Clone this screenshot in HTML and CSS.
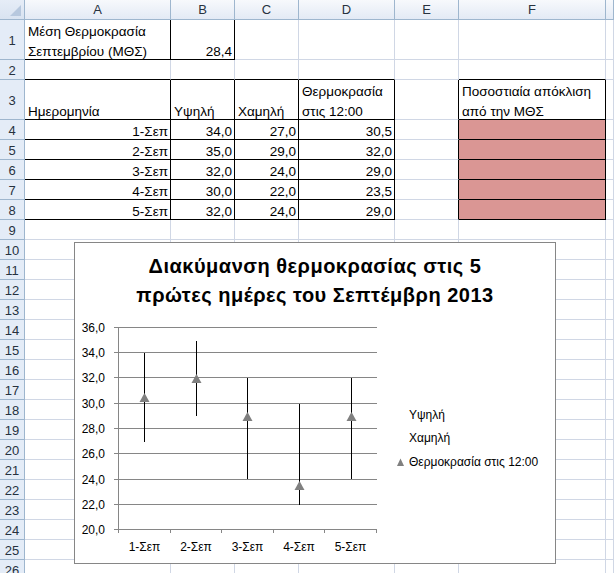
FILE: index.html
```html
<!DOCTYPE html>
<html lang="el">
<head>
<meta charset="utf-8">
<title>Θερμοκρασία Σεπτεμβρίου</title>
<link rel="stylesheet" href="styles.css">
</head>
<body>
<div class="sheet">
  <div class="corner"><svg width="24" height="19" viewBox="0 0 24 19"><polygon points="10,16 21,16 21,5" fill="#b7c8de"/></svg></div>
  <div class="ch">A</div><div class="ch">B</div><div class="ch">C</div><div class="ch">D</div><div class="ch">E</div><div class="ch">F</div><div class="ch"></div>

  <div class="rh">1</div><div class="c bb br"><span>Μέση Θερμοκρασία<br>Σεπτεμβρίου (ΜΘΣ)</span></div><div class="c r bb br"><span>28,4</span></div><div class="c"></div><div class="c"></div><div class="c"></div><div class="c"></div><div class="c"></div>

  <div class="rh">2</div><div class="c bb"></div><div class="c bb"></div><div class="c bb"></div><div class="c bb"></div><div class="c"></div><div class="c bb"></div><div class="c"></div>

  <div class="rh">3</div><div class="c bb br"><span>Ημερομηνία</span></div><div class="c bb br"><span>Υψηλή</span></div><div class="c bb br"><span>Χαμηλή</span></div><div class="c bb br"><span>Θερμοκρασία<br>στις 12:00</span></div><div class="c br"></div><div class="c bb br"><span>Ποσοστιαία απόκλιση<br>από την ΜΘΣ</span></div><div class="c"></div>

  <div class="rh">4</div><div class="c r bb br"><span>1-Σεπ</span></div><div class="c r bb br"><span>34,0</span></div><div class="c r bb br"><span>27,0</span></div><div class="c r bb br"><span>30,5</span></div><div class="c br"></div><div class="c bb br fill"></div><div class="c"></div>

  <div class="rh">5</div><div class="c r bb br"><span>2-Σεπ</span></div><div class="c r bb br"><span>35,0</span></div><div class="c r bb br"><span>29,0</span></div><div class="c r bb br"><span>32,0</span></div><div class="c br"></div><div class="c bb br fill"></div><div class="c"></div>

  <div class="rh">6</div><div class="c r bb br"><span>3-Σεπ</span></div><div class="c r bb br"><span>32,0</span></div><div class="c r bb br"><span>24,0</span></div><div class="c r bb br"><span>29,0</span></div><div class="c br"></div><div class="c bb br fill"></div><div class="c"></div>

  <div class="rh">7</div><div class="c r bb br"><span>4-Σεπ</span></div><div class="c r bb br"><span>30,0</span></div><div class="c r bb br"><span>22,0</span></div><div class="c r bb br"><span>23,5</span></div><div class="c br"></div><div class="c bb br fill"></div><div class="c"></div>

  <div class="rh">8</div><div class="c r bb br"><span>5-Σεπ</span></div><div class="c r bb br"><span>32,0</span></div><div class="c r bb br"><span>24,0</span></div><div class="c r bb br"><span>29,0</span></div><div class="c br"></div><div class="c bb br fill"></div><div class="c"></div>

  <div class="rh">9</div><div class="c"></div><div class="c"></div><div class="c"></div><div class="c"></div><div class="c"></div><div class="c"></div><div class="c"></div>
  <div class="rh">10</div><div class="c"></div><div class="c"></div><div class="c"></div><div class="c"></div><div class="c"></div><div class="c"></div><div class="c"></div>
  <div class="rh">11</div><div class="c"></div><div class="c"></div><div class="c"></div><div class="c"></div><div class="c"></div><div class="c"></div><div class="c"></div>
  <div class="rh">12</div><div class="c"></div><div class="c"></div><div class="c"></div><div class="c"></div><div class="c"></div><div class="c"></div><div class="c"></div>
  <div class="rh">13</div><div class="c"></div><div class="c"></div><div class="c"></div><div class="c"></div><div class="c"></div><div class="c"></div><div class="c"></div>
  <div class="rh">14</div><div class="c"></div><div class="c"></div><div class="c"></div><div class="c"></div><div class="c"></div><div class="c"></div><div class="c"></div>
  <div class="rh">15</div><div class="c"></div><div class="c"></div><div class="c"></div><div class="c"></div><div class="c"></div><div class="c"></div><div class="c"></div>
  <div class="rh">16</div><div class="c"></div><div class="c"></div><div class="c"></div><div class="c"></div><div class="c"></div><div class="c"></div><div class="c"></div>
  <div class="rh">17</div><div class="c"></div><div class="c"></div><div class="c"></div><div class="c"></div><div class="c"></div><div class="c"></div><div class="c"></div>
  <div class="rh">18</div><div class="c"></div><div class="c"></div><div class="c"></div><div class="c"></div><div class="c"></div><div class="c"></div><div class="c"></div>
  <div class="rh">19</div><div class="c"></div><div class="c"></div><div class="c"></div><div class="c"></div><div class="c"></div><div class="c"></div><div class="c"></div>
  <div class="rh">20</div><div class="c"></div><div class="c"></div><div class="c"></div><div class="c"></div><div class="c"></div><div class="c"></div><div class="c"></div>
  <div class="rh">21</div><div class="c"></div><div class="c"></div><div class="c"></div><div class="c"></div><div class="c"></div><div class="c"></div><div class="c"></div>
  <div class="rh">22</div><div class="c"></div><div class="c"></div><div class="c"></div><div class="c"></div><div class="c"></div><div class="c"></div><div class="c"></div>
  <div class="rh">23</div><div class="c"></div><div class="c"></div><div class="c"></div><div class="c"></div><div class="c"></div><div class="c"></div><div class="c"></div>
  <div class="rh">24</div><div class="c"></div><div class="c"></div><div class="c"></div><div class="c"></div><div class="c"></div><div class="c"></div><div class="c"></div>
  <div class="rh">25</div><div class="c"></div><div class="c"></div><div class="c"></div><div class="c"></div><div class="c"></div><div class="c"></div><div class="c"></div>
  <div class="rh">26</div><div class="c"></div><div class="c"></div><div class="c"></div><div class="c"></div><div class="c"></div><div class="c"></div><div class="c"></div>

  <div class="chart">
    <div class="title">Διακύμανση θερμοκρασίας στις 5<br>πρώτες ημέρες του Σεπτέμβρη 2013</div>
    <svg class="plot" width="480" height="320" viewBox="0 0 480 320">
      <g transform="translate(-75,-243)">
        <g class="grid" stroke="#868686" stroke-width="1" fill="none">
          <line x1="114" y1="327.5" x2="377" y2="327.5"/>
          <line x1="114" y1="352.5" x2="377" y2="352.5"/>
          <line x1="114" y1="377.5" x2="377" y2="377.5"/>
          <line x1="114" y1="403.5" x2="377" y2="403.5"/>
          <line x1="114" y1="428.5" x2="377" y2="428.5"/>
          <line x1="114" y1="453.5" x2="377" y2="453.5"/>
          <line x1="114" y1="479.5" x2="377" y2="479.5"/>
          <line x1="114" y1="504.5" x2="377" y2="504.5"/>
          <line x1="114" y1="529.5" x2="377" y2="529.5"/>
          <line x1="118.5" y1="327.5" x2="118.5" y2="533"/>
          <line x1="170.5" y1="529.5" x2="170.5" y2="533"/>
          <line x1="221.5" y1="529.5" x2="221.5" y2="533"/>
          <line x1="273.5" y1="529.5" x2="273.5" y2="533"/>
          <line x1="324.5" y1="529.5" x2="324.5" y2="533"/>
          <line x1="376.5" y1="529.5" x2="376.5" y2="533"/>
        </g>
        <g class="hl" stroke="#000" stroke-width="1">
          <line x1="144.5" y1="353" x2="144.5" y2="441.5"/>
          <line x1="196.5" y1="340.5" x2="196.5" y2="416"/>
          <line x1="247.5" y1="378" x2="247.5" y2="479"/>
          <line x1="299.5" y1="403.5" x2="299.5" y2="504.5"/>
          <line x1="351.5" y1="378" x2="351.5" y2="479"/>
        </g>
        <g class="mk" fill="#808080">
          <polygon points="139.5,402 149.5,402 144.5,393"/>
          <polygon points="191.5,383 201.5,383 196.5,374"/>
          <polygon points="242.5,421 252.5,421 247.5,412"/>
          <polygon points="294.5,490 304.5,490 299.5,481"/>
          <polygon points="346.5,421 356.5,421 351.5,412"/>
          <polygon points="397,466 404,466 400.5,458.5"/>
        </g>
        <g class="ylab">
          <text x="105" y="332">36,0</text>
          <text x="105" y="357">34,0</text>
          <text x="105" y="382">32,0</text>
          <text x="105" y="408">30,0</text>
          <text x="105" y="433">28,0</text>
          <text x="105" y="458">26,0</text>
          <text x="105" y="484">24,0</text>
          <text x="105" y="509">22,0</text>
          <text x="105" y="534">20,0</text>
        </g>
        <g class="xlab">
          <text x="144.5" y="551">1-Σεπ</text>
          <text x="196" y="551">2-Σεπ</text>
          <text x="247.5" y="551">3-Σεπ</text>
          <text x="299" y="551">4-Σεπ</text>
          <text x="350.5" y="551">5-Σεπ</text>
        </g>
        <g class="leg">
          <text x="409" y="419">Υψηλή</text>
          <text x="409" y="442">Χαμηλή</text>
          <text x="409" y="466">Θερμοκρασία στις 12:00</text>
        </g>
      </g>
    </svg>
  </div>
</div>
</body>
</html>
```

FILE: styles.css
```css
html, body {
  margin: 0;
  padding: 0;
  background: #fff;
}
body {
  width: 614px;
  height: 573px;
  overflow: hidden;
  font-family: "Liberation Sans", Arial, sans-serif;
  font-size: 13.5px;
  color: #000;
}
.sheet {
  position: relative;
  display: grid;
  grid-template-columns: 25px 146px 64px 64px 96px 64px 147px 8px;
  grid-template-rows: 20px 40px 20px 40px;
  grid-auto-rows: 20px;
}
.corner {
  box-sizing: border-box;
  background: linear-gradient(#e6edf7, #d9e3f1);
  border-right: 1px solid #9eb6ce;
  border-bottom: 1px solid #9eb6ce;
  display: flex;
}
.corner svg { display: block; }
.ch {
  box-sizing: border-box;
  background: linear-gradient(#f7f9fc, #e3eaf5);
  border-right: 1px solid #9eb6ce;
  border-bottom: 1px solid #9eb6ce;
  display: flex;
  align-items: center;
  justify-content: center;
  color: #27323f;
  font-size: 13px;
  line-height: 19px;
}
.rh {
  box-sizing: border-box;
  background: #e4ecf7;
  border-right: 1px solid #9eb6ce;
  border-bottom: 1px solid #9eb6ce;
  display: flex;
  align-items: center;
  justify-content: center;
  color: #27323f;
  font-size: 13px;
  padding-top: 2px;
}
.c {
  box-sizing: border-box;
  border-right: 1px solid #d0d7e5;
  border-bottom: 1px solid #d0d7e5;
  display: flex;
  align-items: flex-end;
  padding: 0 2px 0 3px;
  white-space: nowrap;
}
.c span {
  line-height: 20px;
  margin-bottom: -3px;
}
.c.r { justify-content: flex-end; text-align: right; }
.c.bb { border-bottom-color: #000; }
.c.br { border-right-color: #000; }
.c.fill { background: #da9694; }

.chart {
  position: absolute;
  left: 74px;
  top: 242px;
  width: 482px;
  height: 322px;
  box-sizing: border-box;
  border: 1px solid #868686;
  background: #fff;
}
.title {
  padding-top: 9px;
  text-align: center;
  font-weight: bold;
  font-size: 20px;
  letter-spacing: 0.5px;
  line-height: 29px;
}
.plot {
  position: absolute;
  left: 0;
  top: 0;
  display: block;
}
.grid line, .hl line { shape-rendering: crispEdges; }
.ylab text {
  font-family: "Liberation Sans", Arial, sans-serif;
  font-size: 12px;
  text-anchor: end;
}
.xlab text {
  font-family: "Liberation Sans", Arial, sans-serif;
  font-size: 12px;
  text-anchor: middle;
}
.leg text {
  font-family: "Liberation Sans", Arial, sans-serif;
  font-size: 12px;
}
```
